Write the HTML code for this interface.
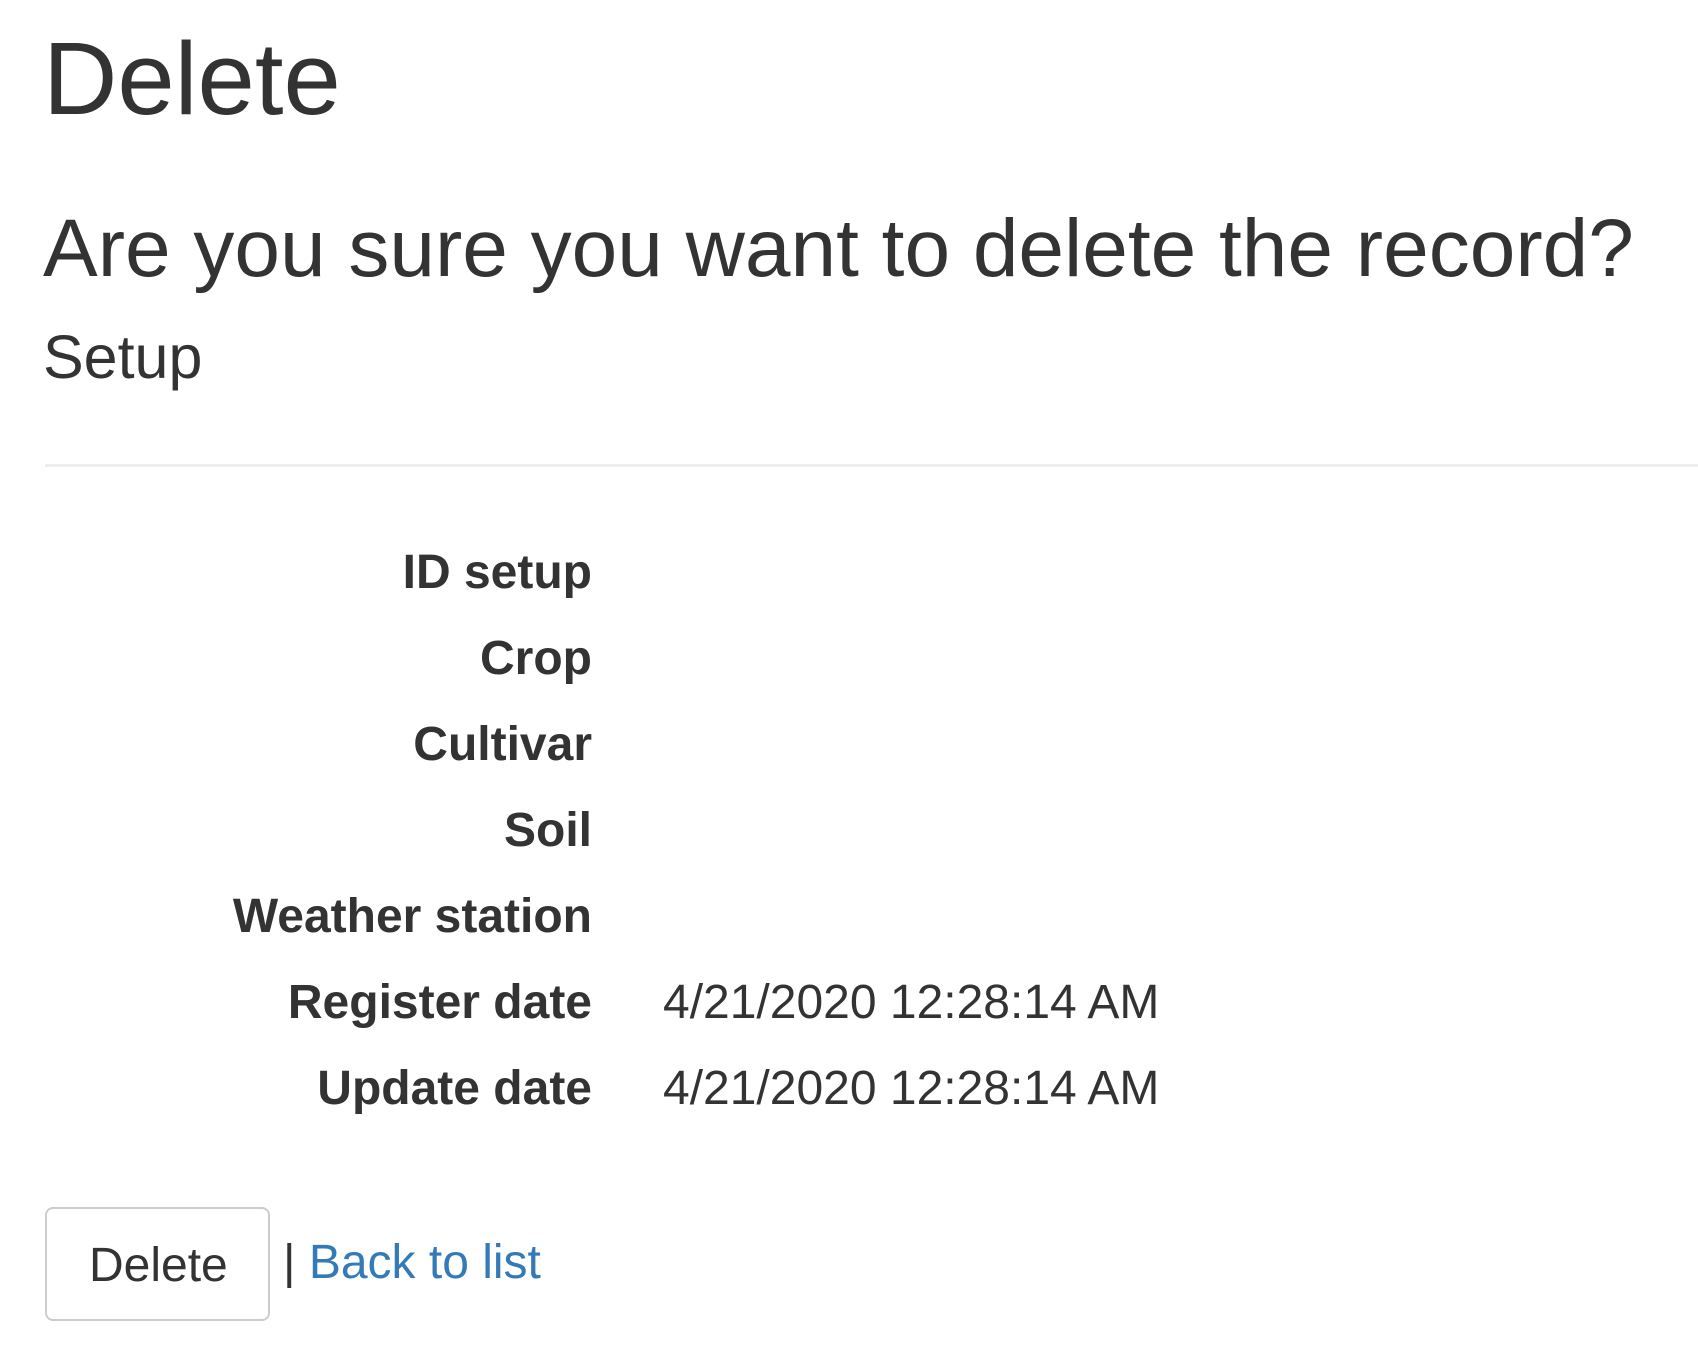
<!DOCTYPE html>
<html><head><meta charset="utf-8">
<style>
html,body{margin:0;padding:0;background:#fff;}
body{font-family:"Liberation Sans",Arial,sans-serif;color:#333;width:1698px;height:1358px;overflow:hidden;position:relative;}
.a{position:absolute;white-space:nowrap;line-height:1;}
h1{position:absolute;left:43px;top:27px;margin:0;font-weight:normal;font-size:103px;line-height:1;}
h2{position:absolute;left:43px;top:208px;margin:0;font-weight:normal;font-size:82px;line-height:1;}
h3{position:absolute;left:43px;top:327px;margin:0;font-weight:normal;font-size:61px;line-height:1;}
hr{position:absolute;left:45px;right:0;top:464px;margin:0;border:0;border-top:3px solid #eee;}
.dt{position:absolute;right:1106px;font-weight:bold;font-size:48px;text-align:right;white-space:nowrap;line-height:1;}
.dd{position:absolute;left:663px;font-size:48px;white-space:nowrap;line-height:1;}
.btn{position:absolute;left:45px;top:1207px;width:225px;height:114px;border:2px solid #ccc;border-radius:8px;box-sizing:border-box;font-size:48px;}
.btn span{position:absolute;left:42px;top:33px;line-height:1;}
</style></head><body>
<h1>Delete</h1>
<h2>Are you sure you want to delete the record?</h2>
<h3>Setup</h3>
<hr>
<div class="dt" style="top:549px">ID setup</div>
<div class="dt" style="top:635px">Crop</div>
<div class="dt" style="top:721px">Cultivar</div>
<div class="dt" style="top:807px">Soil</div>
<div class="dt" style="top:893px">Weather station</div>
<div class="dt" style="top:979px">Register date</div>
<div class="dd" style="top:979px">4/21/2020 12:28:14 AM</div>
<div class="dt" style="top:1065px">Update date</div>
<div class="dd" style="top:1065px">4/21/2020 12:28:14 AM</div>
<div class="btn"><span>Delete</span></div>
<div class="a" style="left:283px;top:1239px;font-size:48px;">| <span style="color:#337ab7">Back to list</span></div>
</body></html>
